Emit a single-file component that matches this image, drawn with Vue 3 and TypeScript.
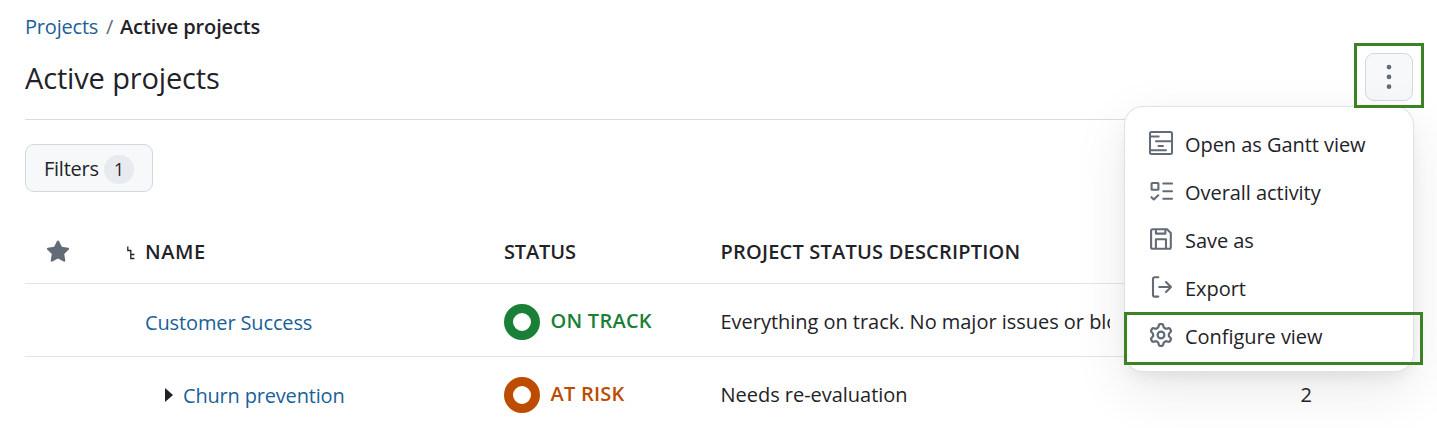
<script setup lang="ts">
interface Project {
  name: string
  nested: boolean
  status: string
  tone: 'good' | 'risk'
  description: string
  members: string
}

interface MenuItem {
  label: string
  icon: 'gantt' | 'tasks' | 'save' | 'export' | 'gear'
}

const projects: Project[] = [
  { name: 'Customer Success', nested: false, status: 'ON TRACK', tone: 'good', description: 'Everything on track. No major issues or blo', members: '' },
  { name: 'Churn prevention', nested: true, status: 'AT RISK', tone: 'risk', description: 'Needs re-evaluation', members: '2' },
]

const menuItems: MenuItem[] = [
  { label: 'Open as Gantt view', icon: 'gantt' },
  { label: 'Overall activity', icon: 'tasks' },
  { label: 'Save as', icon: 'save' },
  { label: 'Export', icon: 'export' },
  { label: 'Configure view', icon: 'gear' },
]
</script>

<template>
  <main class="page">
    <nav class="breadcrumb">
      <a class="crumb">Projects</a>
      <span class="slash">/</span>
      <span class="current">Active projects</span>
    </nav>

    <header class="page-header">
      <h1>Active projects</h1>
      <div class="more">
        <button class="more-button" aria-label="More actions">
          <svg width="24" height="32" viewBox="0 0 24 32" fill="currentColor">
            <circle cx="12" cy="6.1" r="2.35" /><circle cx="12" cy="15.9" r="2.35" /><circle cx="12" cy="25.7" r="2.35" />
          </svg>
        </button>
        <div class="menu">
          <div v-for="item in menuItems" :key="item.label" class="menu-item">
            <svg v-if="item.icon === 'gantt'" class="icon" viewBox="0 0 24 24" fill="none" stroke="currentColor" stroke-width="2">
              <rect x="1" y="1" width="22" height="22" rx="1.5" />
              <path d="M1 5.5H9.7M7 10.2H23M9.5 14.9H14M1 19.2H17" stroke-linecap="round" />
            </svg>
            <svg v-else-if="item.icon === 'tasks'" class="icon" viewBox="0 0 24 24" fill="none" stroke="currentColor" stroke-width="2.1">
              <rect x="2.6" y="4" width="6.8" height="6.8" rx=".5" />
              <path d="M14.3 4.5H23M14.3 12.2H23M14.3 19.7H23M2.5 18.2 4.8 20.5 9.2 16.3" stroke-linecap="round" stroke-linejoin="round" />
            </svg>
            <svg v-else-if="item.icon === 'save'" class="icon" viewBox="0 0 24 24" fill="none" stroke="currentColor" stroke-width="2.1" stroke-linejoin="round">
              <path d="M3.6 2.2H18.1L21.8 5.9V20.3A1.5 1.5 0 0 1 20.3 21.8H3.6A1.5 1.5 0 0 1 2.1 20.3V3.7A1.5 1.5 0 0 1 3.6 2.2Z" />
              <path d="M6.9 2.4V6.6H16.4V2.4M6.9 21.6V12.2H17V21.6" />
            </svg>
            <svg v-else-if="item.icon === 'export'" class="icon" viewBox="0 0 24 24" fill="none" stroke="currentColor" stroke-width="2.1" stroke-linecap="round" stroke-linejoin="round">
              <path d="M9.3 2.2H5.5A1.5 1.5 0 0 0 4 3.7V20.1A1.5 1.5 0 0 0 5.5 21.6H9.3M10.2 12H22M17 6.9 22 12 17 17.1" />
            </svg>
            <svg v-else class="icon" viewBox="0 0 16 16" fill="currentColor">
              <path d="M8 0a8.2 8.2 0 0 1 .701.031C9.444.095 9.99.645 10.16 1.29l.288 1.107c.018.066.079.158.212.224.231.114.454.243.668.386.123.082.233.09.299.071l1.103-.303c.644-.176 1.392.021 1.82.63.27.385.506.792.704 1.218.315.675.111 1.422-.364 1.891l-.814.806c-.049.048-.098.147-.088.294.016.257.016.515 0 .772-.01.147.038.246.088.294l.814.806c.475.469.679 1.216.364 1.891a7.977 7.977 0 0 1-.704 1.217c-.428.61-1.176.807-1.82.63l-1.102-.302c-.067-.019-.177-.011-.3.071a5.909 5.909 0 0 1-.668.386c-.133.066-.194.158-.211.224l-.29 1.106c-.168.646-.715 1.196-1.458 1.26a8.006 8.006 0 0 1-1.402 0c-.743-.064-1.289-.614-1.458-1.26l-.289-1.106c-.018-.066-.079-.158-.212-.224a5.738 5.738 0 0 1-.668-.386c-.123-.082-.233-.09-.299-.071l-1.103.303c-.644.176-1.392-.021-1.82-.63a8.12 8.12 0 0 1-.704-1.218c-.315-.675-.111-1.422.363-1.891l.815-.806c.05-.048.098-.147.088-.294a6.214 6.214 0 0 1 0-.772c.01-.147-.038-.246-.088-.294l-.815-.806C.635 6.045.431 5.298.746 4.623a7.92 7.92 0 0 1 .704-1.217c.428-.61 1.176-.807 1.82-.63l1.102.302c.067.019.177.011.3-.071.214-.143.437-.272.668-.386.133-.066.194-.158.211-.224l.29-1.106C6.009.645 6.556.095 7.299.03 7.53.01 7.764 0 8 0Zm-.571 1.525c-.036.003-.108.036-.137.146l-.289 1.105c-.147.561-.549.967-.998 1.189-.173.086-.34.183-.5.29-.417.278-.97.423-1.529.27l-1.103-.303c-.109-.03-.175.016-.195.045-.22.312-.412.644-.573.99-.014.031-.021.11.059.19l.815.806c.411.406.562.957.53 1.456a4.709 4.709 0 0 0 0 .582c.032.499-.119 1.05-.53 1.456l-.815.806c-.081.08-.073.159-.059.19.162.346.353.677.573.989.02.03.085.076.195.046l1.102-.303c.56-.153 1.113-.008 1.53.27.161.107.328.204.501.29.447.222.85.629.997 1.189l.289 1.105c.029.109.101.143.137.146a6.6 6.6 0 0 0 1.142 0c.036-.003.108-.036.137-.146l.289-1.105c.147-.561.549-.967.998-1.189.173-.086.34-.183.5-.29.417-.278.97-.423 1.529-.27l1.103.303c.109.029.175-.016.195-.045.22-.313.411-.644.573-.99.014-.031.021-.11-.059-.19l-.815-.806c-.411-.406-.562-.957-.53-1.456a4.709 4.709 0 0 0 0-.582c-.032-.499.119-1.05.53-1.456l.815-.806c.081-.08.073-.159.059-.19a6.464 6.464 0 0 0-.573-.989c-.02-.03-.085-.076-.195-.046l-1.102.303c-.56.153-1.113.008-1.53-.27a4.44 4.44 0 0 0-.501-.29c-.447-.222-.85-.629-.997-1.189l-.289-1.105c-.029-.11-.101-.143-.137-.146a6.6 6.6 0 0 0-1.142 0ZM11 8a3 3 0 1 1-6 0 3 3 0 0 1 6 0ZM9.5 8a1.5 1.5 0 1 0-3.001.001A1.5 1.5 0 0 0 9.5 8Z" />
            </svg>
            <span class="menu-label">{{ item.label }}</span>
          </div>
          <div class="mark mark-item"></div>
        </div>
        <div class="mark mark-button"></div>
      </div>
    </header>

    <button class="filters"><span class="filters-label">Filters</span><span class="count">1</span></button>

    <section class="table">
      <div class="row head">
        <svg class="star" width="24" height="24" viewBox="0 0 16 16" fill="currentColor">
          <path d="M8 .25a.75.75 0 0 1 .673.418l1.882 3.815 4.21.612a.75.75 0 0 1 .416 1.279l-3.046 2.97.719 4.192a.751.751 0 0 1-1.088.791L8 12.347l-3.766 1.98a.75.75 0 0 1-1.088-.79l.72-4.194L.818 6.374a.75.75 0 0 1 .416-1.28l4.21-.611L7.327.668A.75.75 0 0 1 8 .25Z" />
        </svg>
        <svg class="hierarchy" width="9" height="14" viewBox="0 0 9 14" fill="none" stroke="currentColor" stroke-width="1.3">
          <path d="M.8 .5V4.5H3.8V12.5H7.4M3.8 8.5H7.4" />
        </svg>
        <span class="th-name">NAME</span>
        <span class="th-status">STATUS</span>
        <span class="th-desc">PROJECT STATUS DESCRIPTION</span>
      </div>
      <div v-for="project in projects" :key="project.name" class="row">
        <span class="name" :class="{ nested: project.nested }">
          <svg v-if="project.nested" class="caret" width="8" height="14" viewBox="0 0 8 14"><path d="M0 0 8 7 0 14Z" fill="#1f2328" /></svg>
          <a>{{ project.name }}</a>
        </span>
        <span class="status" :class="project.tone"><i class="ring"></i><span>{{ project.status }}</span></span>
        <span class="desc">{{ project.description }}</span>
        <span class="members">{{ project.members }}</span>
      </div>
    </section>
  </main>
</template>

<style>
body {
  background: #fff;
  overflow: hidden;
}
</style>

<style scoped>
.page {
  box-sizing: border-box;
  width: 1437px;
  height: 428px;
  overflow: hidden;
  padding: 12px 24px 0 25px;
  font-family: "Open Sans", "Noto Sans", sans-serif;
  font-size: 20px;
  line-height: 30px;
  color: #1f2328;
  white-space: nowrap;
}
button {
  font: inherit;
  color: inherit;
  padding: 0;
}
.breadcrumb {
  display: flex;
  height: 30px;
}
.crumb { width: 81px; letter-spacing: -0.2px; }
.crumb, .name a { color: #1a5f98; }
.slash { width: 14px; color: #656d76; }
.current { font-weight: 600; letter-spacing: -0.12px; }
.page-header {
  display: flex;
  align-items: center;
  justify-content: space-between;
  height: 77px;
  border-bottom: 1px solid #d9dde1;
}
h1 {
  margin: -5px 0 0;
  font-size: 29px;
  font-weight: 400;
  line-height: 40px;
  letter-spacing: -0.15px;
}
.more {
  position: relative;
  height: 48px;
  margin-top: -8px;
}
.more-button {
  display: flex;
  align-items: center;
  justify-content: center;
  width: 48px;
  height: 48px;
  border: 1px solid #d1d9e0;
  border-radius: 9px;
  background: #f6f8fa;
  color: #636c76;
}
.menu {
  position: absolute;
  top: 54px;
  right: 0;
  z-index: 1;
  box-sizing: border-box;
  width: 288px;
  height: 264px;
  padding: 13px 24px;
  border-radius: 18px;
  background: #fff;
  box-shadow: 0 0 0 1px #dde2e8, 0 9px 18px -6px rgba(37, 41, 46, .1), 0 18px 54px rgba(37, 41, 46, .1);
}
.menu-item {
  display: flex;
  gap: 12px;
  height: 48px;
  line-height: 48px;
}
.menu-label { padding-top: 1px; letter-spacing: -0.05px; }
.icon {
  width: 24px;
  height: 24px;
  margin-top: 11px;
  color: #636c76;
}
.mark {
  position: absolute;
  box-sizing: border-box;
  border: 3px solid #3a8223;
}
.mark-button { z-index: 2; top: -10px; left: -11px; width: 70px; height: 65px; }
.mark-item { top: 205px; left: -1px; width: 299px; height: 53px; }
.filters {
  display: flex;
  align-items: center;
  box-sizing: border-box;
  width: 128px;
  height: 48px;
  margin-top: 24px;
  padding-left: 18px;
  border: 1px solid #d1d9e0;
  border-radius: 9px;
  background: #f6f8fa;
}
.filters-label { width: 60px; padding-top: 1px; text-align: left; letter-spacing: -0.25px; }
.count {
  width: 30px;
  height: 29px;
  margin-top: 2px;
  border-radius: 15px;
  background: #e7eaee;
  font-size: 17.5px;
  line-height: 29px;
  text-align: center;
}
.table { margin-top: 19px; }
.row {
  display: grid;
  grid-template-columns: 120px 359px 216.5px 389.5px 1fr;
  align-items: center;
  height: 72px;
  border-bottom: 1px solid #e2e4e7;
}
.head {
  box-sizing: border-box;
  height: 73px;
  padding-top: 10px;
  grid-template-columns: 102px 18px 359px 216.5px 1fr;
  font-weight: 600;
}
.th-name { letter-spacing: 0.6px; }
.th-status { letter-spacing: -0.15px; }
.th-desc { letter-spacing: 0.21px; }
.star { margin-left: 21px; margin-top: -1px; color: #636c76; }
.hierarchy { margin-top: 1px; }
.name {
  grid-column: 2;
  display: flex;
  align-items: center;
  padding-top: 5px;
  letter-spacing: -0.13px;
}
.nested { padding-left: 20px; letter-spacing: -0.18px; }
.caret { margin-right: 10px; margin-top: -1px; }
.status {
  display: flex;
  align-items: center;
  gap: 10.5px;
  font-weight: 600;
  padding-top: 3px;
}
.status span { margin-top: -2px; letter-spacing: 0.25px; }
.status.good { color: #1a7f37; }
.status.risk { color: #bc4c00; }
.ring {
  box-sizing: border-box;
  width: 36px;
  height: 36px;
  border: 9px solid currentColor;
  border-radius: 50%;
}
.desc { overflow: hidden; padding-top: 3px; letter-spacing: -0.03px; }
.members { padding-left: 190.5px; padding-top: 3px; }
</style>
